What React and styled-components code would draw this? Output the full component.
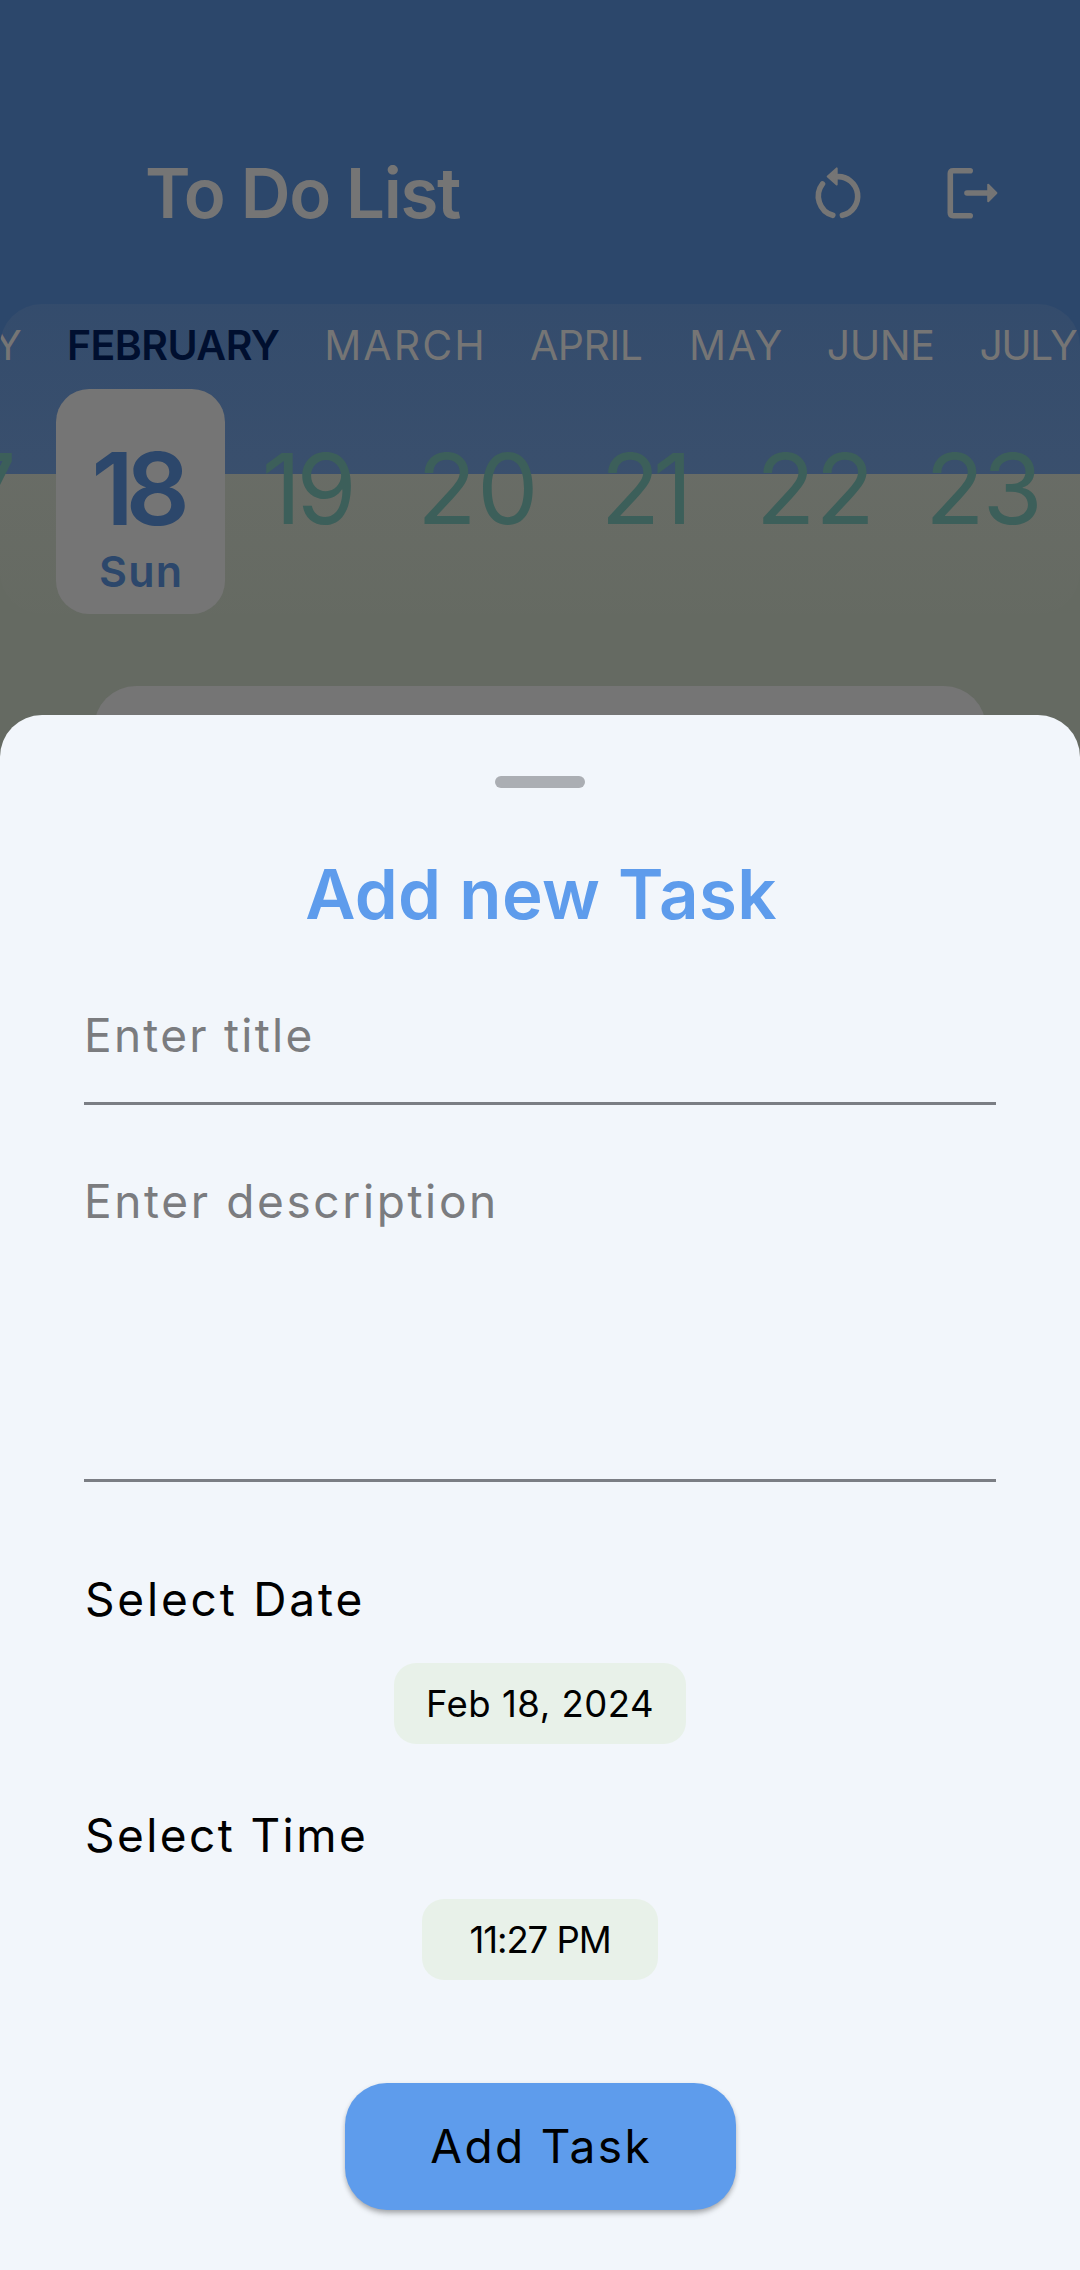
import React from "react";
import styled, { createGlobalStyle } from "styled-components";

const GlobalStyle = createGlobalStyle`
  *, *::before, *::after { box-sizing: border-box; }
  body {
    margin: 0;
    font-family: "Inter", "Liberation Sans", sans-serif;
    font-weight: 400;
  }
  button { font-family: inherit; border: 0; background: none; padding: 0; margin: 0; }
`;

const Screen = styled.div`
  position: relative;
  width: 1080px;
  height: 2270px;
  overflow: hidden;
  background: linear-gradient(#2c476b 0 474px, #656a62 474px);
`;

const AppBar = styled.header`
  display: flex;
  align-items: center;
  gap: 69px;
  height: 304px;
  padding: 138px 74px 56px 145px;
`;

const AppTitle = styled.h1`
  flex: 1;
  margin: 0;
  color: #757575;
  font-size: 69px;
  font-weight: 600;
  line-height: 110px;
  letter-spacing: -1.3px;
`;

const IconButton = styled.button`
  display: flex;
  width: 66px;
  height: 66px;
  color: #757575;
`;

const Calendar = styled.section`
  height: 310px;
  border-radius: 42px;
  overflow: hidden;
  background: linear-gradient(
    rgba(120, 117, 118, 0.1),
    rgba(120, 117, 118, 0.18) 55%,
    rgba(120, 117, 118, 0.02)
  );
`;

const Months = styled.div`
  display: flex;
  height: 82px;
  margin: 0 -30px 3px -194px;
`;

const Month = styled.div`
  flex: none;
  width: ${(p) => p.$width}px;
  color: ${(p) => (p.$active ? "#000f2f" : "#757575")};
  font-size: 41px;
  font-weight: ${(p) => (p.$active ? 600 : 400)};
  line-height: 82px;
  letter-spacing: ${(p) => p.$tracking}px;
  text-indent: ${(p) => p.$tracking}px;
  text-align: center;
  white-space: nowrap;
`;

const Days = styled.div`
  display: flex;
  margin: 0 -30px 0 -112.5px;
`;

const Day = styled.div`
  flex: none;
  display: flex;
  flex-direction: column;
  align-items: center;
  width: 168.7px;
  height: 225px;
  padding-top: 50px;
  border-radius: 33px;
  background: ${(p) => (p.$active ? "#757575" : "transparent")};
  color: ${(p) => (p.$active ? "#2c476b" : "#3c5f5a")};
  font-weight: ${(p) => (p.$active ? 600 : 400)};
`;

const DayNumber = styled.div`
  font-size: ${(p) => (p.$active ? 100 : 97)}px;
  line-height: 100px;
  letter-spacing: ${(p) => p.$tracking}px;
  text-indent: ${(p) => p.$tracking}px;
  white-space: nowrap;
`;

const DayName = styled.div`
  margin-top: 7px;
  font-size: 43px;
  line-height: 50px;
  letter-spacing: 1.3px;
  text-indent: 1.3px;
`;

const TaskCard = styled.section`
  height: 300px;
  margin: 72px 94px 0;
  border-radius: 42px;
  background: #757575;
`;

const Sheet = styled.section`
  position: absolute;
  inset: 714.5px 0 0;
  display: flex;
  flex-direction: column;
  align-items: center;
  padding: 61.5px 84px 0;
  border-radius: 42px 42px 0 0;
  background: #f2f6fb;
`;

const Handle = styled.div`
  flex: none;
  width: 90px;
  height: 12px;
  border-radius: 6px;
  background: #abaeb3;
`;

const SheetTitle = styled.h2`
  margin: 56px 0 0;
  color: #5e9cec;
  font-size: 69px;
  font-weight: 600;
  line-height: 100px;
  letter-spacing: 0.37px;
  text-indent: 2px;
`;

const Field = styled.div`
  flex: none;
  align-self: stretch;
  height: ${(p) => p.$height}px;
  margin-top: ${(p) => p.$gap}px;
  border-bottom: 3px solid #7b7e84;
  color: #7b7c7f;
  font-size: 46px;
  line-height: 70px;
  letter-spacing: ${(p) => p.$tracking}px;
`;

const PickerLabel = styled.div`
  align-self: stretch;
  margin-top: ${(p) => p.$gap}px;
  padding-left: 1px;
  color: #000;
  font-size: 46px;
  line-height: 70px;
  letter-spacing: ${(p) => p.$tracking}px;
`;

const Chip = styled.button`
  flex: none;
  width: ${(p) => p.$width}px;
  height: 81px;
  margin-top: 29px;
  border-radius: 22px;
  background: #e8f1e9;
  color: #000;
  font-size: 36.5px;
  line-height: 80px;
  letter-spacing: ${(p) => p.$tracking}px;
`;

const SubmitButton = styled.button`
  flex: none;
  width: 391px;
  height: 127px;
  margin-top: 103px;
  padding-bottom: 2px;
  border-radius: 42px;
  background: #5e9cec;
  box-shadow: 0 5px 6px -2px rgba(0, 0, 0, 0.24), 0 2px 5px rgba(0, 0, 0, 0.16);
  color: #000;
  font-size: 46px;
  letter-spacing: 2.4px;
  text-indent: 2.4px;
`;

const RestartIcon = () => (
  <svg width="66" height="66" viewBox="0 0 66 66" fill="none" stroke="currentColor" strokeWidth="5.6" strokeLinecap="round">
    <path d="M17.5 23.9A20 20 0 0 0 27.8 55.3" />
    <path d="M32 16.7A19.55 19.55 0 0 1 37.4 55.3" />
    <path d="M22.7 16.4L31.7 8.4V24.4Z" fill="currentColor" strokeWidth="2" strokeLinejoin="round" />
  </svg>
);

const LogoutIcon = () => (
  <svg width="66" height="66" viewBox="0 0 66 66" fill="none" stroke="currentColor" strokeWidth="5.6" strokeLinecap="round">
    <path d="M30.2 10.7H13.2Q10.3 10.7 10.3 13.6V52.8Q10.3 55.7 13.2 55.7H30.2" />
    <path d="M27 33H48" />
    <path d="M48.2 24.8V41.2L56.4 33Z" fill="currentColor" strokeWidth="2" strokeLinejoin="round" />
  </svg>
);

const months = [
  { name: "JANUARY", width: 238.5, tracking: 0 },
  { name: "FEBRUARY", width: 258, tracking: -0.55, active: true },
  { name: "MARCH", width: 204, tracking: 2.09 },
  { name: "APRIL", width: 160, tracking: -0.57 },
  { name: "MAY", width: 138.5, tracking: 1.6 },
  { name: "JUNE", width: 151.5, tracking: -0.43 },
  { name: "JULY", width: 144.5, tracking: -1.74 },
];

const days = [
  { number: 17, tracking: -5 },
  { number: 18, name: "Sun", tracking: -8, active: true },
  { number: 19, tracking: -4.85 },
  { number: 20, tracking: 0.84 },
  { number: 21, tracking: -7.1 },
  { number: 22, tracking: 0.44 },
  { number: 23, tracking: -1.66 },
];

export default function App() {
  return (
    <Screen>
      <GlobalStyle />
      <AppBar>
        <AppTitle>To Do List</AppTitle>
        <IconButton aria-label="Reset"><RestartIcon /></IconButton>
        <IconButton aria-label="Log out"><LogoutIcon /></IconButton>
      </AppBar>
      <Calendar>
        <Months>
          {months.map((m) => (
            <Month key={m.name} $width={m.width} $tracking={m.tracking} $active={m.active}>{m.name}</Month>
          ))}
        </Months>
        <Days>
          {days.map((d) => (
            <Day key={d.number} $active={d.active}>
              <DayNumber $tracking={d.tracking} $active={d.active}>{d.number}</DayNumber>
              {d.name && <DayName>{d.name}</DayName>}
            </Day>
          ))}
        </Days>
      </Calendar>
      <TaskCard />
      <Sheet>
        <Handle />
        <SheetTitle>Add new Task</SheetTitle>
        <Field $height={105} $gap={56} $tracking={2.25}>Enter title</Field>
        <Field $height={316} $gap={61} $tracking={2.62}>Enter description</Field>
        <PickerLabel $gap={82} $tracking={2.82}>Select Date</PickerLabel>
        <Chip $width={292} $tracking={0.51}>Feb 18, 2024</Chip>
        <PickerLabel $gap={56} $tracking={2.42}>Select Time</PickerLabel>
        <Chip $width={236} $tracking={-1.06}>11:27 PM</Chip>
        <SubmitButton>Add Task</SubmitButton>
      </Sheet>
    </Screen>
  );
}
